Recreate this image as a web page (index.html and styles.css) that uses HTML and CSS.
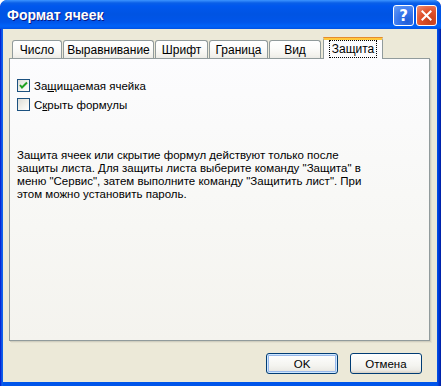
FILE: index.html
```
<!DOCTYPE html>
<html lang="ru">
<head>
<meta charset="utf-8">
<title>Формат ячеек</title>
<link rel="stylesheet" href="styles.css">
</head>
<body>
<div class="window">
  <div class="titlebar">
    <span class="title">Формат ячеек</span>
    <div class="tbtns">
      <div class="tbtn help">?</div>
      <div class="tbtn close">
        <svg width="21" height="21" viewBox="0 0 21 21"><path d="M6 6 L15 15 M15 6 L6 15" stroke="#fff" stroke-width="2.2" stroke-linecap="square"/></svg>
      </div>
    </div>
  </div>
  <div class="client">
    <div class="tabs">
      <div class="tab w1">Число</div>
      <div class="tab w2">Выравнивание</div>
      <div class="tab w3">Шрифт</div>
      <div class="tab w4">Граница</div>
      <div class="tab w5">Вид</div>
      <div class="tab active"><span class="focus">Защита</span></div>
    </div>
    <div class="panel">
      <div class="cb">
        <span class="box">
          <svg width="11" height="11" viewBox="0 0 11 11"><path d="M2 5 L4 7.5 L9 2.5" fill="none" stroke="#21A121" stroke-width="2"/></svg>
        </span>
        <span>За<u>щ</u>ищаемая ячейка</span>
      </div>
      <div class="cb">
        <span class="box"></span>
        <span>С<u>к</u>рыть формулы</span>
      </div>
      <p class="note">Защита ячеек или скрытие формул действуют только после защиты листа. Для защиты листа выберите команду "Защита" в меню "Сервис", затем выполните команду "Защитить лист". При этом можно установить пароль.</p>
    </div>
    <div class="buttons">
      <div class="btn default">OK</div>
      <div class="btn">Отмена</div>
    </div>
  </div>
</div>
</body>
</html>
```
FILE: styles.css
```
html, body {
  margin: 0;
  padding: 0;
  background: #fff;
}
body {
  font-family: "Liberation Sans", "DejaVu Sans", sans-serif;
  font-size: 11.5px;
}
.window {
  width: 441px;
  height: 386px;
  display: flex;
  flex-direction: column;
  background: linear-gradient(90deg, #0019CF 0, #0831D9 1px, #166AEE 2px, #0055EA 3px, #0055EA 437px, #0035D0 439px, #001EA0 441px);
  border-radius: 7px 7px 0 0;
  overflow: hidden;
}
.titlebar {
  height: 29px;
  flex: none;
  display: flex;
  align-items: center;
  padding: 0 7px 0 7px;
  background: linear-gradient(#3D95FF 0, #0A5FE8 3px, #0058EE 6px, #0054E3 14px, #0055EA 22px, #0062F8 26px, #0058EE 28px, #0050E0 29px);
  border-radius: 7px 7px 0 0;
}
.title {
  flex: 1;
  color: #fff;
  font-family: "Liberation Sans", sans-serif;
  font-weight: bold;
  font-size: 14px;
  text-shadow: 1px 1px 0 #0A1883;
  padding-top: 1px;
}
.tbtns {
  display: flex;
  gap: 2px;
  margin-right: -3px;
  margin-top: 2px;
}
.tbtn {
  width: 19px;
  height: 19px;
  border: 1px solid #fff;
  border-radius: 3px;
  display: flex;
  align-items: center;
  justify-content: center;
  color: #fff;
}
.help {
  background: radial-gradient(circle at 70% 80%, #1E5CD8 0, #3A78EE 50%, #6A9EF5 100%);
  font-family: "DejaVu Sans", sans-serif;
  font-weight: bold;
  font-size: 15px;
}
.close {
  background: radial-gradient(circle at 70% 80%, #C4401C 0, #E0512B 50%, #F09278 100%);
}
.close svg {
  display: block;
}
.client {
  flex: 1;
  margin: 0 4px 4px 3px;
  background: #ECE9D8;
  padding: 8px 8px 0 6px;
  display: flex;
  flex-direction: column;
}
.tabs {
  height: 21px;
  display: flex;
  align-items: flex-end;
  gap: 1px;
  padding-left: 3px;
  position: relative;
  z-index: 1;
}
.tab {
  height: 18px;
  box-sizing: border-box;
  border: 1px solid #919B9C;
  border-bottom: none;
  border-radius: 3px 3px 0 0;
  background: linear-gradient(#FFFFFF 0, #FCFCFB 40%, #F4F3EE 80%, #ECEBE6 100%);
  display: flex;
  align-items: center;
  justify-content: center;
  padding-top: 1px;
  color: #000;
  font-size: 12px;
}
.w1 { width: 50px; }
.w2 { width: 91px; }
.w3 { width: 53px; }
.w4 { width: 59px; }
.w5 { width: 52px; }
.tab.active {
  width: 60px;
  height: 22px;
  margin-bottom: -1px;
  margin-left: 1px;
  background: #FCFCFE;
  border-top: 3px solid #FFC83C;
  padding-top: 0;
  position: relative;
}
.tab.active::before {
  content: "";
  position: absolute;
  left: -1px;
  right: -1px;
  top: -3px;
  height: 1px;
  background: #E68B2C;
  border-radius: 3px 3px 0 0;
}
.focus {
  outline: 1px dotted #000;
  outline-offset: 0;
  padding: 1px 2px 1px 2px;
  margin-top: -1px;
}
.panel {
  height: 283px;
  box-sizing: border-box;
  width: 421px;
  border: 1px solid #919B9C;
  background: linear-gradient(#FCFCFE 0, #F7F7F4 60%, #F4F3EE 100%);
  box-shadow: 1px 1px 0 #D0CEBF, 2px 2px 0 #E3E0D0;
  padding: 20px 7px 0 7px;
}
.cb {
  display: flex;
  align-items: center;
  height: 13px;
  margin-bottom: 6px;
  gap: 4px;
  color: #000;
}
.box {
  width: 13px;
  height: 13px;
  box-sizing: border-box;
  border: 1px solid #1C5180;
  background: linear-gradient(135deg, #DCDCD7 0, #F0F0EA 50%, #FFFFFF 100%);
  display: flex;
  align-items: center;
  justify-content: center;
}
.box svg {
  display: block;
}
.note {
  margin: 38px 0 0 0;
  line-height: 13px;
  width: 350px;
  color: #000;
}
.buttons {
  display: flex;
  justify-content: flex-end;
  gap: 12px;
  margin-top: 12px;
  padding-right: 7px;
}
.btn {
  width: 72px;
  height: 21px;
  box-sizing: border-box;
  border: 1px solid #003C74;
  border-radius: 3px;
  background: linear-gradient(#FFFFFF 0, #F4F4F0 60%, #ECEBE6 85%, #D6D0C5 100%);
  display: flex;
  align-items: center;
  justify-content: center;
  color: #000;
}
.btn.default {
  box-shadow: inset 0 0 0 1px #CEE7FF, inset 0 0 0 2px #98B8EA;
}
```
